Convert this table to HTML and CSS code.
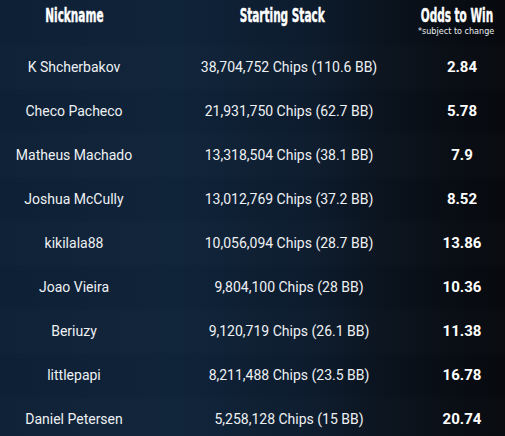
FILE: index.html
```html
<!DOCTYPE html>
<html>
<head>
<meta charset="utf-8">
<link rel="stylesheet" href="styles.css">
</head>
<body>
<div class="board">
  <div class="head">
    <div class="hcell c1"><span class="title">Nickname</span></div>
    <div class="hcell c2"><span class="title">Starting Stack</span></div>
    <div class="hcell c3">
      <span class="title">Odds to Win</span>
      <span class="note">*subject to change</span>
    </div>
  </div>
  <div class="row"><div class="name">K Shcherbakov</div><div class="stack">38,704,752 Chips (110.6 BB)</div><div class="odds">2.84</div></div>
  <div class="row"><div class="name">Checo Pacheco</div><div class="stack">21,931,750 Chips (62.7 BB)</div><div class="odds">5.78</div></div>
  <div class="row"><div class="name">Matheus Machado</div><div class="stack">13,318,504 Chips (38.1 BB)</div><div class="odds">7.9</div></div>
  <div class="row"><div class="name">Joshua McCully</div><div class="stack">13,012,769 Chips (37.2 BB)</div><div class="odds">8.52</div></div>
  <div class="row"><div class="name">kikilala88</div><div class="stack">10,056,094 Chips (28.7 BB)</div><div class="odds">13.86</div></div>
  <div class="row"><div class="name">Joao Vieira</div><div class="stack">9,804,100 Chips (28 BB)</div><div class="odds">10.36</div></div>
  <div class="row"><div class="name">Beriuzy</div><div class="stack">9,120,719 Chips (26.1 BB)</div><div class="odds">11.38</div></div>
  <div class="row"><div class="name">littlepapi</div><div class="stack">8,211,488 Chips (23.5 BB)</div><div class="odds">16.78</div></div>
  <div class="row"><div class="name">Daniel Petersen</div><div class="stack">5,258,128 Chips (15 BB)</div><div class="odds">20.74</div></div>
</div>
</body>
</html>
```
FILE: styles.css
```css
html, body {
  margin: 0;
  padding: 0;
}
body {
  width: 505px;
  height: 436px;
  overflow: hidden;
  background: linear-gradient(90deg, #0e2036 0%, #0f2339 35%, #0d1c2e 60%, #0a121c 78%, #07090d 100%);
  font-family: Roboto, "Liberation Sans", sans-serif;
  color: #eef1f4;
}
.board {
  display: flex;
  flex-direction: column;
}
.head {
  display: grid;
  grid-template-columns: 148px 282px 75px;
  height: 45px;
}
.hcell {
  display: flex;
  flex-direction: column;
  align-items: center;
  padding-top: 4px;
}
.hcell.c2 {
  padding-right: 14px;
}
.hcell.c3 {
  padding-right: 22px;
}
.title {
  font-family: "DejaVu Sans Condensed", "DejaVu Sans", sans-serif;
  font-weight: bold;
  font-size: 19px;
  line-height: 23px;
  color: #ffffff;
  transform: scaleX(0.615);
  white-space: nowrap;
  -webkit-text-stroke: 0.4px #ffffff;
}
.note {
  font-family: "DejaVu Sans", sans-serif;
  font-size: 8.5px;
  line-height: 8px;
  color: #e8ecf0;
  white-space: nowrap;
  transform: scaleX(0.95);
}
.row {
  display: grid;
  grid-template-columns: 148px 282px 64px;
  height: 44px;
  align-items: center;
  font-size: 14px;
}
.row:nth-child(even) {
  background: rgba(255, 255, 255, 0.012);
}
.name, .stack, .odds {
  text-align: center;
  white-space: nowrap;
}
.odds {
  font-weight: bold;
  font-size: 15px;
  color: #ffffff;
}
```
